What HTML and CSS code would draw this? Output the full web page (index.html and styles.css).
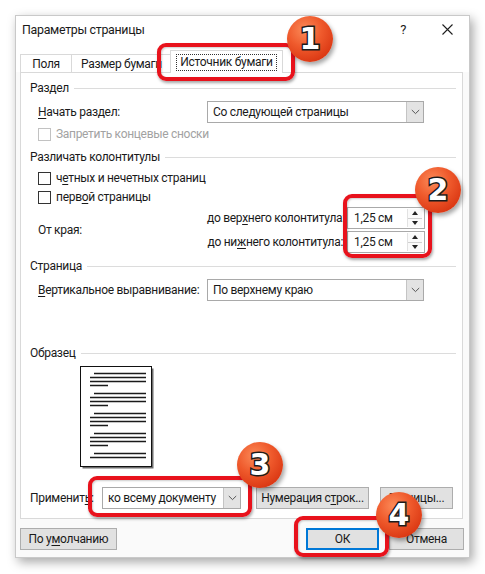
FILE: index.html
```html
<!DOCTYPE html>
<html lang="ru">
<head>
<meta charset="utf-8">
<title>Параметры страницы</title>
<link rel="stylesheet" href="styles.css">
</head>
<body>
<div class="stage">
  <div class="dialog">
    <div class="titlebar">
      <span class="title">Параметры страницы</span>
      <span class="help">?</span>
      <span class="close"><svg width="11" height="11" viewBox="0 0 11 11"><path d="M0.5 0.5L10.5 10.5M10.5 0.5L0.5 10.5" stroke="#1e1e1e" stroke-width="1.1" fill="none"/></svg></span>
    </div>
    <div class="tabs">
      <div class="tab t1">Поля</div>
      <div class="tab t2">Размер бумаги</div>
      <div class="tab active"><span class="focus">Источник бумаги</span></div>
    </div>
    <div class="panel">
      <div class="group"><span>Раздел</span><i></i></div>
      <div class="row r-start">
        <span class="lbl"><u>Н</u>ачать раздел:</span>
        <div class="combo wide"><span class="val">Со следующей страницы</span><span class="arrow"><svg width="9" height="6" viewBox="0 0 9 6"><path d="M0.8 1L4.5 4.6L8.2 1" stroke="#555" stroke-width="1" fill="none"/></svg></span></div>
      </div>
      <div class="check disabled r-nosn"><span class="box"></span><span>Запретить концевые сноски</span></div>
      <div class="group g2"><span>Различать колонтитулы</span><i></i></div>
      <div class="check r-c1"><span class="box"></span><span>ч<u>е</u>тных и нечетных страниц</span></div>
      <div class="check r-c2"><span class="box"></span><span>перв<u>о</u>й страницы</span></div>
      <div class="edges">
        <span class="lbl">От края:</span>
        <div class="spins">
          <div class="spinrow"><span class="slbl">до вер<u>х</u>него колонтитула:</span><div class="spin"><span class="val">1,25 см</span><span class="btns"><b class="up"></b><b class="dn"></b></span></div></div>
          <div class="spinrow"><span class="slbl">до ни<u>ж</u>него колонтитула:</span><div class="spin"><span class="val">1,25 см</span><span class="btns"><b class="up"></b><b class="dn"></b></span></div></div>
        </div>
      </div>
      <div class="group g3"><span>Страница</span><i></i></div>
      <div class="row r-valign">
        <span class="lbl"><u>В</u>ертикальное выравнивание:</span>
        <div class="combo wide"><span class="val">По верхнему краю</span><span class="arrow"><svg width="9" height="6" viewBox="0 0 9 6"><path d="M0.8 1L4.5 4.6L8.2 1" stroke="#555" stroke-width="1" fill="none"/></svg></span></div>
      </div>
      <div class="group g4"><span>Образец</span><i></i></div>
      <div class="preview">
        <svg width="76" height="104" viewBox="0 0 76 104">
          <rect x="2.5" y="2.5" width="71" height="100" fill="#6d6d6d"/>
          <rect x="0.5" y="0.5" width="71" height="100" fill="#fff" stroke="#111" stroke-width="1"/>
          <g stroke="#1a1a1a" stroke-width="1.4">
            <path d="M14 7.5H66M10 11.5H66M10 15.5H66M10 19.5H28"/>
            <path d="M14 27.5H66M10 31.5H66M10 35.5H66M10 39.5H28"/>
            <path d="M14 47.5H66M10 51.5H66M10 55.5H66M10 59.5H28"/>
            <path d="M14 67.5H66M10 71.5H66M10 75.5H66M10 79.5H28"/>
            <path d="M14 87.5H66M10 91.5H66"/>
          </g>
        </svg>
      </div>
      <div class="apply">
        <span class="albl">Применит<u>ь</u>:</span>
        <div class="combo small"><span class="val">ко всему документу</span><span class="arrow"><svg width="9" height="6" viewBox="0 0 9 6"><path d="M0.8 1L4.5 4.6L8.2 1" stroke="#555" stroke-width="1" fill="none"/></svg></span></div>
        <button class="btn lines">Нумерация с<u>т</u>рок...</button>
        <button class="btn borders">Границы...</button>
      </div>
    </div>
    <div class="footer">
      <button class="btn default">По у<u>м</u>олчанию</button>
      <button class="btn ok">ОК</button>
      <button class="btn cancel">Отмена</button>
    </div>
  </div>

  <div class="hl hl1"></div>
  <div class="hl hl2"></div>
  <div class="hl hl3"></div>
  <div class="hl hl4"></div>
  <div class="badge b1">1</div>
  <div class="badge b2">2</div>
  <div class="badge b3">3</div>
  <div class="badge b4">4</div>
</div>
</body>
</html>
```

FILE: styles.css
```css
* { box-sizing: border-box; }
html, body { margin: 0; padding: 0; background: #fff; }
body {
  font-family: Roboto, "Noto Sans", sans-serif;
  font-size: 12px;
  letter-spacing: -0.3px;
  color: #1a1a1a;
}
u { text-decoration: underline; text-underline-offset: 2px; text-decoration-thickness: 1px; }
.stage { position: relative; width: 485px; height: 574px; padding: 15px 0 0 15px; }

.dialog {
  width: 455px;
  height: 543px;
  background: #fafafa;
  border: 1px solid #c9c9c9;
  box-shadow: 3px 4px 10px rgba(0,0,0,0.35);
  display: flex;
  flex-direction: column;
}
.titlebar {
  height: 26px;
  background: #fff;
  display: flex;
  align-items: center;
  padding-left: 6px;
}
.title { flex: 1; font-size: 12.4px; }
.help { font-size: 13px; margin-right: 36px; }
.close { display: flex; margin-right: 16px; }

.tabs {
  height: 30px;
  display: flex;
  align-items: flex-end;
  padding-left: 4px;
  background: #fff;
}
.tab {
  height: 18px;
  border: 1px solid #d9d9d9;
  border-bottom: none;
  background: #fff;
  display: flex;
  align-items: center;
  justify-content: center;
  line-height: 16px;
  white-space: nowrap;
}
.t1 { width: 52px; }
.t2 { width: 100px; border-left: none; }
.tab.active {
  height: 23px;
  width: 113px;
  margin-left: -2px;
  margin-bottom: -1px;
  position: relative;
  z-index: 1;
  background: #fff;
}
.focus { border: 1px dotted #333; padding: 0 3px; line-height: 15px; }

.panel {
  width: 443px;
  height: 447px;
  margin-left: 4px;
  background: #fff;
  border: 1px solid #d9d9d9;
  padding: 7px 6px 0 9px;
}
.group { height: 16px; display: flex; align-items: center; white-space: nowrap; }
.group i { flex: 1; height: 1px; background: #dcdcdc; margin-left: 5px; }
.g2 { margin-top: 6px; }
.g3 { margin-top: 5px; }
.g4 { margin-top: 44px; }

.row { display: flex; align-items: center; height: 22px; padding-left: 8px; }
.r-start { margin-top: 5px; }
.r-valign { margin-top: 5px; }
.lbl { width: 169px; white-space: nowrap; }

.combo {
  height: 22px;
  border: 1px solid #a9a9a9;
  background: #fff;
  display: flex;
  align-items: stretch;
}
.combo .val { flex: 1; padding-left: 5px; display: flex; align-items: center; white-space: nowrap; overflow: hidden; }
.combo .arrow {
  width: 17px;
  background: #e3e3e3;
  border-left: 1px solid #c4c4c4;
  display: flex;
  align-items: center;
  justify-content: center;
}
.wide { width: 217px; }
.small { width: 139px; }

.check { display: flex; align-items: center; height: 18px; padding-left: 8px; white-space: nowrap; }
.check .box { width: 13px; height: 13px; border: 1px solid #333; background: #fff; margin-right: 5px; }
.check.disabled { color: #a2a2a2; }
.check.disabled .box { border-color: #c2c2c2; }
.r-nosn { margin-top: 2px; }
.r-c1 { margin-top: 4px; }
.r-c2 { margin-top: 1px; }

.edges { display: flex; align-items: center; padding-left: 8px; margin-top: 1px; }
.spins { display: flex; flex-direction: column; gap: 2px; }
.spinrow { display: flex; align-items: center; height: 22px; }
.slbl { width: 136px; text-align: right; margin-right: 4px; white-space: nowrap; }
.spin {
  width: 78px;
  height: 22px;
  border: 1px solid #a9a9a9;
  background: #fff;
  display: flex;
}
.spin .val { flex: 1; padding-left: 6px; display: flex; align-items: center; white-space: nowrap; }
.spin .btns {
  width: 15px;
  display: flex;
  flex-direction: column;
  border-left: 1px solid #e2e2e2;
  margin: 1px 2px 1px 0;
}
.spin .btns b {
  flex: 1;
  display: flex;
  align-items: center;
  justify-content: center;
  background: #fafafa;
}
.spin .btns b.up { border-bottom: 1px solid #d0d0d0; }
.spin .btns b::after { content: ""; width: 0; height: 0; border-left: 3.5px solid transparent; border-right: 3.5px solid transparent; }
.spin .btns b.up::after { border-bottom: 4px solid #222; }
.spin .btns b.dn::after { border-top: 4px solid #222; }

.preview { margin-top: 5px; margin-left: 50px; height: 104px; }
.preview svg { display: block; }

.apply { display: flex; align-items: center; height: 22px; margin-top: 17px; }
.albl { width: 72px; white-space: nowrap; }
.btn {
  font-family: inherit;
  font-size: 12px;
  letter-spacing: -0.3px;
  color: #1a1a1a;
  height: 22px;
  padding: 0;
  background: #e1e1e1;
  border: 1px solid #adadad;
  display: flex;
  align-items: center;
  justify-content: center;
  white-space: nowrap;
  overflow: hidden;
}
.lines { width: 113px; margin-left: 15px; }
.borders { width: 73px; margin-left: 11px; }

.footer { display: flex; align-items: center; margin-top: 9px; padding: 0 5px 0 4px; }
.default { width: 97px; }
.ok { width: 73px; margin-left: auto; border: 2px solid #0078d7; }
.cancel { width: 75px; margin-left: 10px; }

/* annotations */
.hl {
  position: absolute;
  border: 4px solid #e8121c;
  border-radius: 9px;
  box-shadow: 1px 2px 3px rgba(0,0,0,0.35), inset 1px 1px 2px rgba(0,0,0,0.2);
}
.hl1 { left: 157px; top: 43px; width: 138px; height: 38px; }
.hl2 { left: 343px; top: 194px; width: 89px; height: 64px; }
.hl3 { left: 88px; top: 476px; width: 164px; height: 41px; }
.hl4 { left: 294px; top: 516px; width: 95px; height: 41px; }

.badge {
  position: absolute;
  width: 46px;
  height: 46px;
  border-radius: 50%;
  background: radial-gradient(circle at 38% 30%, #fb8a58 0%, #ef5a2c 40%, #dc3a15 75%, #b9210c 100%);
  box-shadow: 2px 3px 4px rgba(0,0,0,0.35);
  display: flex;
  align-items: center;
  justify-content: center;
  font-family: "DejaVu Sans", sans-serif;
  font-weight: bold;
  font-size: 30px;
  letter-spacing: 0;
  color: #fff;
  -webkit-text-stroke: 3px #1c1c1c;
  paint-order: stroke fill;
  line-height: 1;
}
.b1 { left: 287px; top: 16px; }
.b2 { left: 415px; top: 167px; }
.b3 { left: 237px; top: 442px; }
.b4 { left: 376px; top: 492px; }
```
